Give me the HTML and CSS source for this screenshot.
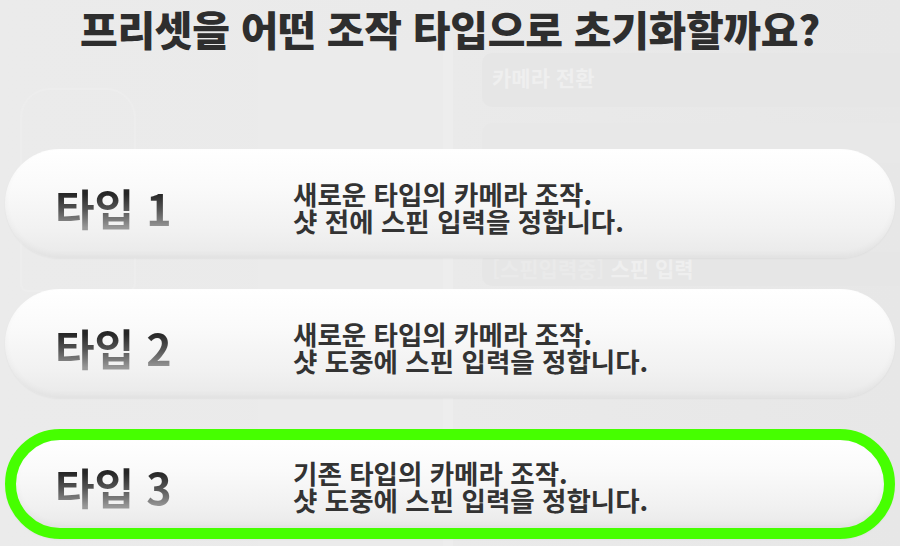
FILE: index.html
```html
<!DOCTYPE html>
<html lang="ko">
<head>
<meta charset="utf-8">
<title>프리셋 초기화</title>
<link rel="stylesheet" href="styles.css">
</head>
<body>
<div class="screen">
  <div class="backdrop" aria-hidden="true">
    <div class="ghost-pad"></div>
    <div class="ghost-col"></div>
    <div class="ghost-strip"></div>
    <div class="ghost-box ghost-box-1"><span>카메라 전환</span></div>
    <div class="ghost-box ghost-box-2"></div>
    <div class="ghost-box ghost-box-3"><span class="dim">[스핀입력중]</span> <span>스핀 입력</span></div>
  </div>
  <main class="dialog">
    <h1 class="title">프리셋을 어떤 조작 타입으로 초기화할까요?</h1>
    <ul class="options">
      <li class="option">
        <span class="option-label">타입 1</span>
        <span class="option-desc"><span class="line">새로운 타입의 카메라 조작.</span><span class="line">샷 전에 스핀 입력을 정합니다.</span></span>
      </li>
      <li class="option">
        <span class="option-label">타입 2</span>
        <span class="option-desc"><span class="line">새로운 타입의 카메라 조작.</span><span class="line">샷 도중에 스핀 입력을 정합니다.</span></span>
      </li>
      <li class="option option-selected">
        <span class="option-label">타입 3</span>
        <span class="option-desc"><span class="line">기존 타입의 카메라 조작.</span><span class="line">샷 도중에 스핀 입력을 정합니다.</span></span>
      </li>
    </ul>
  </main>
</div>
</body>
</html>
```
FILE: styles.css
```css
html, body {
  margin: 0;
  padding: 0;
}
body {
  width: 900px;
  height: 546px;
  overflow: hidden;
  background: #e9e9e9;
  font-family: "Noto Sans CJK KR", "Noto Sans", sans-serif;
}
.screen {
  position: relative;
  width: 900px;
  height: 546px;
  background: linear-gradient(90deg, #ebebeb 0%, #eaeaea 50%, #e7e7e7 100%);
}
.backdrop {
  position: absolute;
  inset: 0;
  z-index: 0;
}
.ghost-pad {
  position: absolute;
  left: 20px;
  top: 88px;
  width: 112px;
  height: 200px;
  border: 2px solid #ededed;
  border-radius: 30px 30px 8px 8px;
}
.ghost-col {
  position: absolute;
  left: 258px;
  top: 40px;
  width: 185px;
  height: 506px;
  background: #ebebeb;
}
.ghost-strip {
  position: absolute;
  left: 443px;
  top: 40px;
  width: 10px;
  height: 506px;
  background: #ededed;
}
.ghost-box {
  position: absolute;
  left: 482px;
  right: 0;
  background: #e6e6e6;
  border-radius: 10px 0 0 10px;
  color: #efefef;
  font-size: 21px;
  font-weight: 700;
  padding-left: 10px;
  box-sizing: border-box;
}
.ghost-box-1 {
  top: 53px;
  height: 54px;
  padding-top: 9px;
}
.ghost-box-2 {
  top: 123px;
  height: 40px;
  background: #e8e8e8;
}
.ghost-box-3 {
  top: 252px;
  height: 34px;
  padding-top: 1px;
}
.ghost-box .dim {
  color: #eaeaea;
}
.dialog {
  position: relative;
  z-index: 1;
  display: flex;
  flex-direction: column;
}
.title {
  margin: 0;
  padding: 0;
  font-size: 41px;
  line-height: 57px;
  font-weight: 900;
  color: #2e2e2e;
  text-align: center;
  letter-spacing: -0.3px;
}
.options {
  list-style: none;
  margin: 92px 5px 0;
  padding: 0;
  display: flex;
  flex-direction: column;
  gap: 31px;
}
.option {
  box-sizing: border-box;
  height: 109px;
  border-radius: 56px;
  display: flex;
  align-items: center;
  padding: 6px 0 0 50px;
  background: linear-gradient(180deg, #ffffff 0%, #fafafa 35%, #f1f1f1 75%, #e9e9e9 100%);
  box-shadow: inset 0 -3px 6px rgba(0, 0, 0, 0.035), 0 1px 2px rgba(0, 0, 0, 0.04);
}
.option-selected {
  height: 110px;
  border: 11px solid #46ff00;
  padding-left: 39px;
  padding-top: 4px;
}
.option-label {
  width: 238px;
  flex: none;
  font-size: 43px;
  font-weight: 700;
  line-height: 52px;
  background: linear-gradient(180deg, #262626 25%, #555555 55%, #999999 90%);
  -webkit-background-clip: text;
  background-clip: text;
  color: transparent;
}
.option-desc {
  display: flex;
  flex-direction: column;
  font-size: 26.5px;
  font-weight: 700;
  color: #333333;
}
.line {
  display: block;
  line-height: 27px;
  white-space: nowrap;
}
```
